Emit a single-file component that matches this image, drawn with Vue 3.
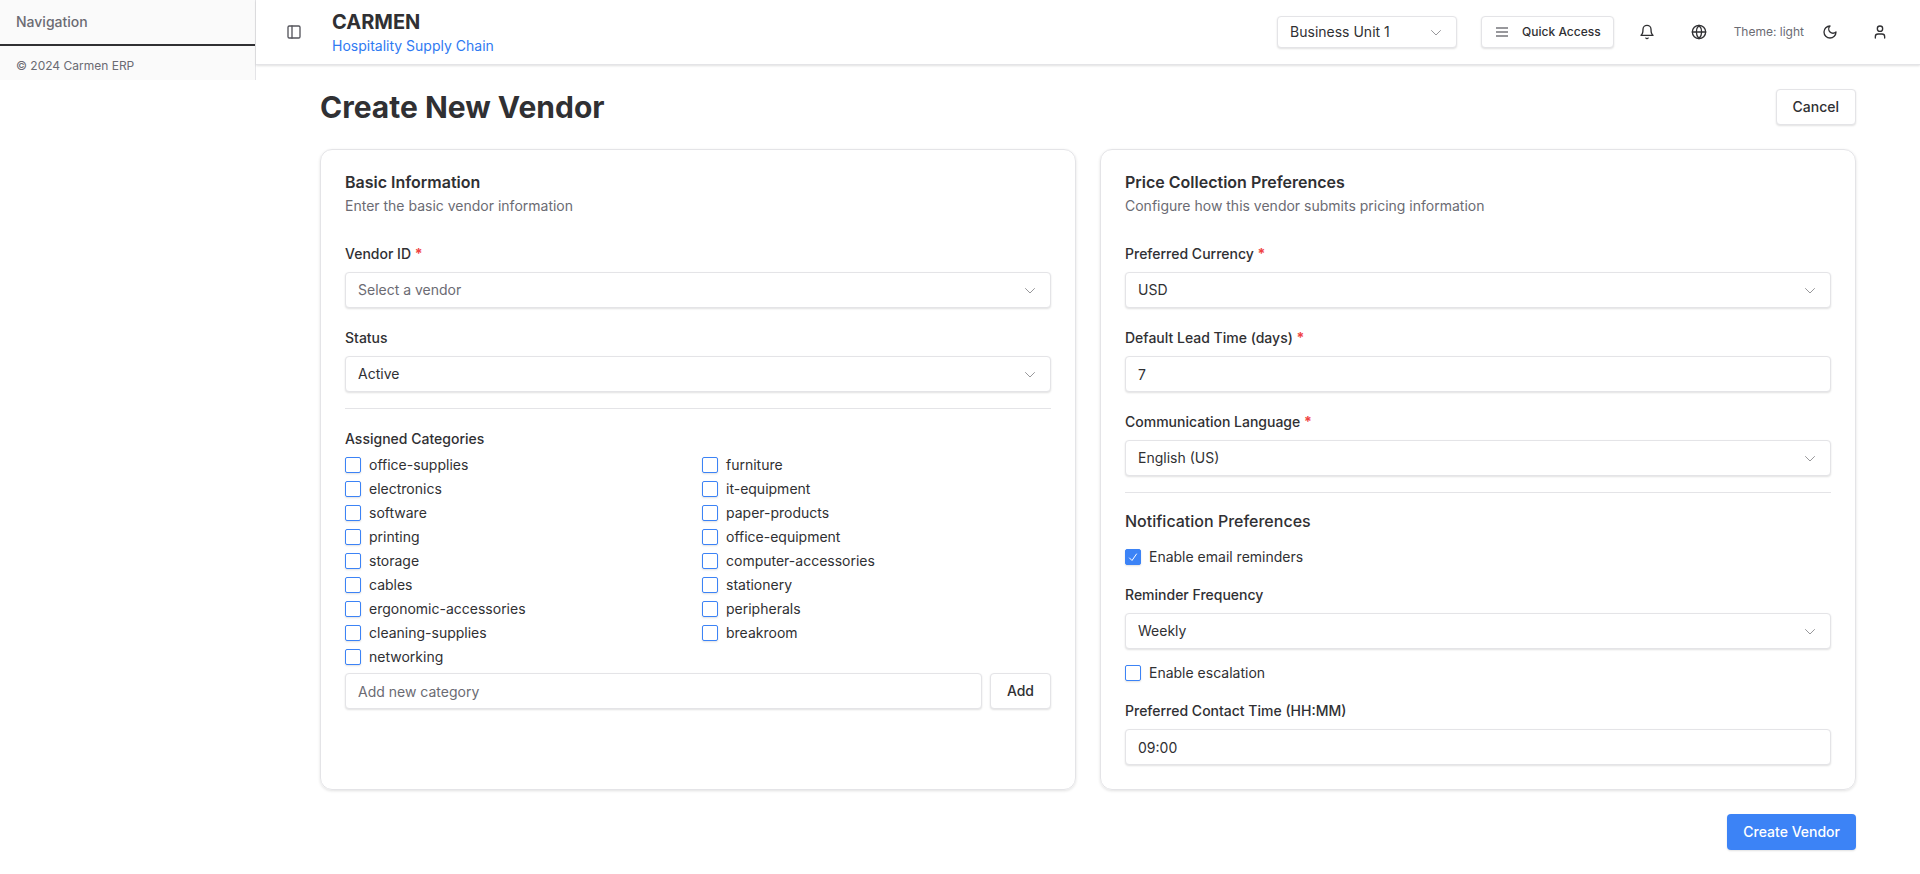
<script setup>
import { ref } from 'vue'

const categories = ref([
  'office-supplies', 'furniture', 'electronics', 'it-equipment', 'software', 'paper-products',
  'printing', 'office-equipment', 'storage', 'computer-accessories', 'cables', 'stationery',
  'ergonomic-accessories', 'peripherals', 'cleaning-supplies', 'breakroom', 'networking'
])
const assigned = ref([])
const newCategory = ref('')
const unit = ref('Business Unit 1')
const vendor = ref('')
const status = ref('Active')
const currency = ref('USD')
const leadTime = ref('7')
const language = ref('English (US)')
const reminders = ref(true)
const frequency = ref('Weekly')
const escalation = ref(false)
const contactTime = ref('09:00')

function addCategory() {
  const name = newCategory.value.trim()
  if (name && !categories.value.includes(name)) categories.value.push(name)
  newCategory.value = ''
}
</script>

<template>
  <div class="layout">
    <aside class="sidebar">
      <h2 class="sidebar-title">Navigation</h2>
      <p class="sidebar-footer">© 2024 Carmen ERP</p>
    </aside>

    <div class="content">
      <header class="topbar">
        <button class="icon-button toggle" type="button" aria-label="Toggle sidebar">
          <svg class="icon" viewBox="0 0 24 24"><rect x="3" y="3" width="18" height="18" rx="2" /><path d="M9 3v18" /></svg>
        </button>
        <a class="brand" href="#">
          <span class="brand-name">CARMEN</span>
          <span class="brand-tagline">Hospitality Supply Chain</span>
        </a>
        <div class="select unit-select">
          <select v-model="unit" class="control" aria-label="Business unit">
            <option>Business Unit 1</option>
            <option>Business Unit 2</option>
          </select>
          <svg class="chevron" viewBox="0 0 16 16"><path d="M3.5 6.5 8 11l4.500-4.500" /></svg>
        </div>
        <button class="button quick-access" type="button">
          <svg class="icon menu" viewBox="0 0 24 24"><path d="M3 6h18M3 12h18M3 18h18" /></svg>
          Quick Access
        </button>
        <button class="icon-button bell" type="button" aria-label="Notifications">
          <svg class="icon" viewBox="0 0 24 24"><path d="M6 8a6 6 0 0 1 12 0c0 7 3 9 3 9H3s3-2 3-9M10.3 21a1.94 1.94 0 0 0 3.4 0" /></svg>
        </button>
        <button class="icon-button globe" type="button" aria-label="Language">
          <svg class="icon" viewBox="0 0 24 24"><circle cx="12" cy="12" r="10" /><path d="M12 2a14.5 14.5 0 0 0 0 20 14.5 14.5 0 0 0 0-20M2 12h20" /></svg>
        </button>
        <span class="theme">Theme: light</span>
        <button class="icon-button moon" type="button" aria-label="Toggle theme">
          <svg class="icon" viewBox="0 0 24 24"><path d="M12 3a6 6 0 0 0 9 9 9 9 0 1 1-9-9Z" /></svg>
        </button>
        <button class="icon-button" type="button" aria-label="Account">
          <svg class="icon" viewBox="0 0 24 24"><circle cx="12" cy="7" r="4" /><path d="M19 21v-2a4 4 0 0 0-4-4H9a4 4 0 0 0-4 4v2" /></svg>
        </button>
      </header>

      <main class="page">
        <div class="page-head">
          <h1 class="page-title">Create New Vendor</h1>
          <button class="button" type="button">Cancel</button>
        </div>

        <form class="form" @submit.prevent>
          <div class="cards">
            <section class="card">
              <div class="card-head">
                <h2 class="card-title">Basic Information</h2>
                <p class="card-text">Enter the basic vendor information</p>
              </div>

              <div class="field">
                <label class="label" for="vendor">Vendor ID <span class="required">*</span></label>
                <div class="select">
                  <select id="vendor" v-model="vendor" class="control" :class="{ empty: !vendor }">
                    <option value="">Select a vendor</option>
                  </select>
                  <svg class="chevron" viewBox="0 0 16 16"><path d="M3.5 6.5 8 11l4.500-4.500" /></svg>
                </div>
              </div>

              <div class="field">
                <label class="label" for="status">Status</label>
                <div class="select">
                  <select id="status" v-model="status" class="control">
                    <option>Active</option>
                    <option>Inactive</option>
                  </select>
                  <svg class="chevron" viewBox="0 0 16 16"><path d="M3.5 6.5 8 11l4.500-4.500" /></svg>
                </div>
              </div>

              <hr class="divider" />

              <fieldset class="group">
                <legend class="label legend">Assigned Categories</legend>
                <div class="categories">
                  <label v-for="name in categories" :key="name" class="check">
                    <input v-model="assigned" class="checkbox" type="checkbox" :value="name" />
                    <svg class="tick" viewBox="0 0 16 16"><path d="m4.500 9 2.500 2.500 4.500-6.500" /></svg>
                    {{ name }}
                  </label>
                </div>
                <div class="add-row">
                  <input v-model="newCategory" class="control" type="text" placeholder="Add new category" aria-label="Add new category" />
                  <button class="button" type="button" @click="addCategory">Add</button>
                </div>
              </fieldset>
            </section>

            <section class="card">
              <div class="card-head">
                <h2 class="card-title">Price Collection Preferences</h2>
                <p class="card-text">Configure how this vendor submits pricing information</p>
              </div>

              <div class="field">
                <label class="label" for="currency">Preferred Currency <span class="required">*</span></label>
                <div class="select">
                  <select id="currency" v-model="currency" class="control">
                    <option>USD</option>
                    <option>EUR</option>
                  </select>
                  <svg class="chevron" viewBox="0 0 16 16"><path d="M3.5 6.5 8 11l4.500-4.500" /></svg>
                </div>
              </div>

              <div class="field">
                <label class="label" for="lead">Default Lead Time (days) <span class="required">*</span></label>
                <input id="lead" v-model="leadTime" class="control" type="text" inputmode="numeric" />
              </div>

              <div class="field">
                <label class="label" for="language">Communication Language <span class="required">*</span></label>
                <div class="select">
                  <select id="language" v-model="language" class="control">
                    <option>English (US)</option>
                    <option>English (UK)</option>
                  </select>
                  <svg class="chevron" viewBox="0 0 16 16"><path d="M3.5 6.5 8 11l4.500-4.500" /></svg>
                </div>
              </div>

              <hr class="divider" />

              <h3 class="subheading">Notification Preferences</h3>
              <label class="check">
                <input v-model="reminders" class="checkbox" type="checkbox" />
                <svg class="tick" viewBox="0 0 16 16"><path d="m4.500 9 2.500 2.500 4.500-6.500" /></svg>
                Enable email reminders
              </label>

              <div class="field">
                <label class="label" for="frequency">Reminder Frequency</label>
                <div class="select">
                  <select id="frequency" v-model="frequency" class="control">
                    <option>Weekly</option>
                    <option>Daily</option>
                  </select>
                  <svg class="chevron" viewBox="0 0 16 16"><path d="M3.5 6.5 8 11l4.500-4.500" /></svg>
                </div>
              </div>

              <label class="check">
                <input v-model="escalation" class="checkbox" type="checkbox" />
                <svg class="tick" viewBox="0 0 16 16"><path d="m4.500 9 2.500 2.500 4.500-6.500" /></svg>
                Enable escalation
              </label>

              <div class="field">
                <label class="label" for="contact">Preferred Contact Time (HH:MM)</label>
                <input id="contact" v-model="contactTime" class="control" type="text" />
              </div>
            </section>
          </div>

          <div class="actions">
            <button class="button primary" type="submit">Create Vendor</button>
          </div>
        </form>
      </main>
    </div>
  </div>
</template>

<style>
body {
  margin: 0;
  background: #fff;
}
</style>

<style scoped>
.layout,
.layout * {
  box-sizing: border-box;
}

.layout {
  display: flex;
  align-items: flex-start;
  font: 14px/20px Inter, sans-serif;
  color: #303033;
}

h1,
h2,
h3,
p {
  margin: 0;
}

button,
input,
select {
  margin: 0;
  font: inherit;
  color: inherit;
}

.sidebar {
  flex: none;
  width: 256px;
  border-right: 1px solid #e4e4e7;
  background: #fafafa;
  color: #6b6b73;
}

.sidebar-title {
  padding: 12px 16px;
  border-bottom: 2px solid #303033;
  font-size: 14px;
  font-weight: 500;
}

.sidebar-footer {
  padding: 12px 16px 6px;
  font-size: 12px;
  line-height: 16px;
}

.content {
  flex: 1;
  min-width: 0;
}

.topbar {
  display: flex;
  align-items: center;
  height: 65px;
  padding: 0 24px 0 22px;
  border-bottom: 1px solid #e4e4e7;
  box-shadow: 0 1px 2px rgb(0 0 0 / 12%);
}

.icon-button {
  display: grid;
  place-items: center;
  flex: none;
  width: 32px;
  height: 32px;
  padding: 0;
  border: 0;
  background: none;
  cursor: pointer;
}

.toggle {
  color: #55555c;
}

.icon,
.chevron,
.tick {
  width: 16px;
  height: 16px;
  fill: none;
  stroke: currentColor;
  stroke-width: 2;
  stroke-linecap: round;
  stroke-linejoin: round;
}

.brand {
  display: flex;
  flex-direction: column;
  margin-left: 22px;
  margin-right: auto;
  color: #2f7af2;
  text-decoration: none;
}

.brand-name {
  font-size: 20px;
  line-height: 28px;
  font-weight: 700;
  color: #303033;
}

.control,
.button {
  height: 36px;
  border: 1px solid #e4e4e7;
  border-radius: 4px;
  background: #fff;
  box-shadow: 0 1px 2px rgb(0 0 0 / 12%);
}

.control {
  display: block;
  width: 100%;
  padding: 0 12px;
  appearance: none;
}

.control.empty,
.control::placeholder {
  color: #6b6b73;
  opacity: 1;
}

.select {
  display: grid;
  align-items: center;
}

.select > * {
  grid-area: 1 / 1;
}

.chevron {
  justify-self: end;
  margin-right: 13px;
  color: #98989b;
  stroke-width: 1;
  pointer-events: none;
}

.unit-select {
  width: 180px;
}

.unit-select .control,
.quick-access {
  height: 32px;
}

.button {
  flex: none;
  padding: 0 16px;
  font-weight: 500;
  cursor: pointer;
}

.quick-access {
  display: flex;
  align-items: center;
  gap: 12px;
  margin-left: 24px;
  padding: 0 12px;
  font-size: 12px;
}

.menu {
  color: #77777c;
  stroke-linecap: butt;
}

.bell {
  margin-left: 17px;
}

.globe {
  margin-left: 20px;
}

.theme {
  margin-left: 19px;
  font-size: 12px;
  color: #6b6b73;
}

.moon {
  margin-left: 10px;
  margin-right: 18px;
}

.page {
  padding: 24px 64px;
}

.page-head {
  display: flex;
  align-items: center;
  justify-content: space-between;
  margin-bottom: 24px;
}

.page-title {
  font-size: 30px;
  line-height: 36px;
  font-weight: 700;
}

.cards {
  display: grid;
  grid-template-columns: 1fr 1fr;
  gap: 24px;
}

.card {
  display: flex;
  flex-direction: column;
  gap: 16px;
  min-width: 0;
  padding: 24px;
  border: 1px solid #e4e4e7;
  border-radius: 12px;
  box-shadow: 0 1px 3px rgb(0 0 0 / 12%);
}

.card-head {
  display: grid;
  gap: 6px;
  padding-bottom: 8px;
}

.card-title {
  font-size: 16px;
  line-height: 16px;
  font-weight: 600;
}

.card-text {
  color: #6b6b73;
}

.field {
  display: flex;
  flex-direction: column;
  gap: 8px;
}

.label {
  padding: 4px 0 0;
  font-weight: 500;
}

.required {
  font-weight: 700;
  color: #ef4343;
}

.divider {
  width: 100%;
  height: 1px;
  margin: 0;
  border: 0;
  background: #e4e4e7;
}

.group {
  min-width: 0;
  margin: 0;
  padding: 0;
  border: 0;
}

.legend {
  margin-bottom: 8px;
}

.categories {
  display: grid;
  grid-template-columns: 1fr 1fr;
  gap: 8px;
}

.check {
  display: grid;
  grid-template-columns: 16px 1fr;
  align-items: center;
  column-gap: 8px;
  line-height: 16px;
}

.checkbox {
  grid-area: 1 / 1;
  width: 16px;
  height: 16px;
  border: 1px solid #3c83f6;
  border-radius: 2px;
  background: #fff;
  box-shadow: 0 1px 2px rgb(0 0 0 / 12%);
  appearance: none;
}

.checkbox:checked {
  background: #3c83f6;
}

.tick {
  grid-area: 1 / 1;
  color: #fff;
  stroke-width: 1;
  pointer-events: none;
}

.add-row {
  display: flex;
  gap: 8px;
  margin-top: 8px;
}

.subheading {
  font-size: 16px;
  line-height: 24px;
  font-weight: 500;
}

.actions {
  display: flex;
  justify-content: flex-end;
  margin-top: 24px;
}

.primary {
  border: 0;
  background: #3c83f6;
  color: #fff;
}
</style>
